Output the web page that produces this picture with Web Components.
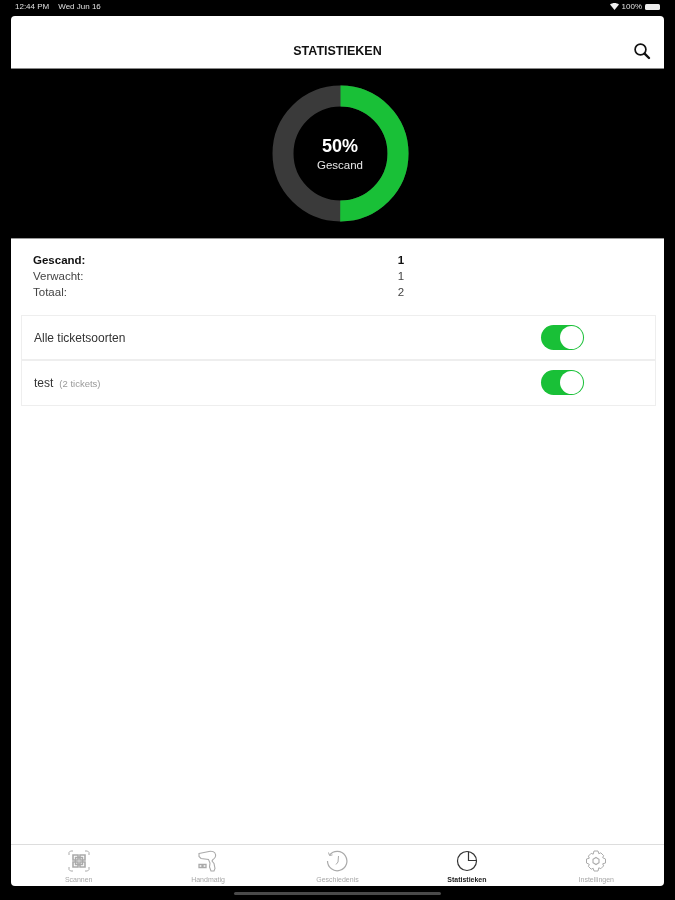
<!DOCTYPE html>
<html lang="nl">
<head>
<meta charset="utf-8">
<title>Statistieken</title>
<style>
  html, body { margin: 0; height: 100%; background: #000; }
  body { font-family: "Liberation Sans", Arial, sans-serif; overflow: hidden; }
</style>
</head>
<body>
<app-screen>
  <status-bar slot="status" time="12:44 PM" date="Wed Jun 16" battery="100%"></status-bar>
  <nav-header slot="header" title="STATISTIEKEN"></nav-header>
  <donut-chart slot="chart" percent="50" label="Gescand"></donut-chart>

  <stat-table>
    <stat-row strong label="Gescand:" value="1"></stat-row>
    <stat-row label="Verwacht:" value="1"></stat-row>
    <stat-row label="Totaal:" value="2"></stat-row>
  </stat-table>

  <ticket-list>
    <ticket-row label="Alle ticketsoorten"></ticket-row>
    <ticket-row label="test" note="(2 tickets)"></ticket-row>
  </ticket-list>

  <tab-bar slot="tabs">
    <tab-item label="Scannen" icon="scan"></tab-item>
    <tab-item label="Handmatig" icon="scanner"></tab-item>
    <tab-item label="Geschiedenis" icon="history"></tab-item>
    <tab-item label="Statistieken" icon="stats" active></tab-item>
    <tab-item label="Instellingen" icon="gear"></tab-item>
  </tab-bar>
</app-screen>

<script>
class AppScreen extends HTMLElement {
  constructor() {
    super();
    this.attachShadow({ mode: "open" });
    this.shadowRoot.innerHTML = `
    <style>
      :host {
        display: flex;
        flex-direction: column;
        height: 900px;
        background: #000;
        filter: blur(0.5px);
      }
      .sheet {
        flex: 1;
        display: flex;
        flex-direction: column;
        margin: 0 11px;
        background: #fff;
        border-radius: 0 0 4px 4px;
        border-top: 1px solid #999;
      }
      .content { flex: 1; }
      .home {
        height: 14px;
        display: flex;
        justify-content: center;
        align-items: center;
      }
      .home i {
        width: 207px;
        height: 3px;
        border-radius: 2px;
        background: #4a4a4a;
      }
    </style>
    <slot name="status"></slot>
    <slot name="header"></slot>
    <slot name="chart"></slot>
    <div class="sheet">
      <div class="content"><slot></slot></div>
      <slot name="tabs"></slot>
    </div>
    <div class="home"><i></i></div>
  `;
  }
}
customElements.define("app-screen", AppScreen);

class StatusBar extends HTMLElement {
  constructor() {
    super();
    this.attachShadow({ mode: "open" });
  }
  connectedCallback() {
    this.shadowRoot.innerHTML = `
    <style>
      :host {
        display: flex;
        align-items: center;
        justify-content: space-between;
        height: 16px;
        padding: 0 15px 3px 15px;
        box-sizing: border-box;
        color: #e0e0e0;
        font-size: 8px;
      }
      .left { display: flex; gap: 9px; }
      .right { display: flex; align-items: center; gap: 3px; }
      .batt { width: 15px; height: 6px; background: #eee; border-radius: 1.5px; }
    </style>
    <div class="left"><span>${this.getAttribute("time")}</span><span>${this.getAttribute("date")}</span></div>
    <div class="right">
      <svg width="9" height="7" viewBox="0 0 9 7"><path d="M0 1.5C2.5-.5 6.5-.5 9 1.5L4.5 7Z" fill="#eee"/></svg>
      <span>${this.getAttribute("battery")}</span>
      <span class="batt"></span>
    </div>
  `;
  }
}
customElements.define("status-bar", StatusBar);

class NavHeader extends HTMLElement {
  constructor() {
    super();
    this.attachShadow({ mode: "open" });
  }
  connectedCallback() {
    this.shadowRoot.innerHTML = `
    <style>
      :host {
        display: block;
        margin: 0 11px;
        height: 53px;
        box-sizing: border-box;
        background: #fff;
        border-radius: 4px 4px 0 0;
        border-bottom: 1px solid #888;
        position: relative;
      }
      h1 {
        margin: 0;
        padding-top: 28px;
        text-align: center;
        font-size: 12.5px;
        line-height: 14px;
        font-weight: bold;
        color: #111;
      }
      svg { position: absolute; right: 13px; top: 26px; }
    </style>
    <h1>${this.getAttribute("title")}</h1>
    <svg width="18" height="18" viewBox="0 0 18 18" fill="none" stroke="#111">
      <circle cx="7.5" cy="7.5" r="5.4" stroke-width="1.7"/>
      <path d="M11.6 11.6L16 16" stroke-width="2.4" stroke-linecap="round"/>
    </svg>
  `;
  }
}
customElements.define("nav-header", NavHeader);

class DonutChart extends HTMLElement {
  constructor() {
    super();
    this.attachShadow({ mode: "open" });
  }
  connectedCallback() {
    const percent = Number(this.getAttribute("percent"));
    const r = 57.5;
    const full = 2 * Math.PI * r;
    this.shadowRoot.innerHTML = `
    <style>
      :host {
        display: flex;
        justify-content: center;
        padding: 16px 0 16px 5px;
        box-sizing: border-box;
        height: 169px;
      }
      .ring {
        width: 137px;
        height: 137px;
        display: grid;
        place-items: center;
        position: relative;
      }
      svg { position: absolute; inset: 0; }
      .txt {
        position: relative;
        display: flex;
        flex-direction: column;
        align-items: center;
        color: #fff;
      }
      b { font-size: 18px; line-height: 20px; font-weight: bold; margin-top: 2px; }
      span { font-size: 11.5px; line-height: 16px; color: #e6e6e6; margin-top: 1px; }
    </style>
    <div class="ring">
      <svg width="137" height="137" viewBox="0 0 137 137" fill="none" stroke-width="21">
        <circle cx="68.5" cy="68.5" r="${r}" stroke="#3a3a3a"/>
        <circle cx="68.5" cy="68.5" r="${r}" stroke="#19c037" transform="rotate(-90 68.5 68.5)"
          stroke-dasharray="${full * percent / 100} ${full}"/>
      </svg>
      <div class="txt"><b>${percent}%</b><span>${this.getAttribute("label")}</span></div>
    </div>
  `;
  }
}
customElements.define("donut-chart", DonutChart);

class StatTable extends HTMLElement {
  constructor() {
    super();
    this.attachShadow({ mode: "open" });
    this.shadowRoot.innerHTML = `
    <style>
      :host { display: block; padding: 13px 0 15px 22px; }
    </style>
    <slot></slot>
  `;
  }
}
customElements.define("stat-table", StatTable);

class StatRow extends HTMLElement {
  constructor() {
    super();
    this.attachShadow({ mode: "open" });
  }
  connectedCallback() {
    this.shadowRoot.innerHTML = `
    <style>
      :host {
        display: grid;
        grid-template-columns: 362px 12px;
        height: 16px;
        line-height: 16px;
        font-size: 11.5px;
        color: ${this.hasAttribute("strong") ? "#111" : "#444"};
        font-weight: ${this.hasAttribute("strong") ? "bold" : "normal"};
      }
      span:last-child { text-align: center; }
    </style>
    <span>${this.getAttribute("label")}</span><span>${this.getAttribute("value")}</span>
  `;
  }
}
customElements.define("stat-row", StatRow);

class TicketList extends HTMLElement {
  constructor() {
    super();
    this.attachShadow({ mode: "open" });
    this.shadowRoot.innerHTML = `
    <style>
      :host {
        display: block;
        margin: 0 8px 0 10px;
        padding-bottom: 1px;
        border: 1px solid #eee;
      }
      ::slotted(ticket-row:not(:last-child)) { border-bottom: 2px solid #eee; }
    </style>
    <slot></slot>
  `;
  }
}
customElements.define("ticket-list", TicketList);

class TicketRow extends HTMLElement {
  constructor() {
    super();
    this.attachShadow({ mode: "open" });
  }
  connectedCallback() {
    const note = this.getAttribute("note");
    this.shadowRoot.innerHTML = `
    <style>
      :host {
        display: flex;
        align-items: center;
        height: 43px;
        padding: 0 71px 0 12px;
        font-size: 12px;
        color: #333;
      }
      .name { flex: 1; display: flex; align-items: baseline; gap: 6px; }
      small { font-size: 9.5px; color: #999; }
    </style>
    <div class="name"><span>${this.getAttribute("label")}</span>${note ? `<small>${note}</small>` : ""}</div>
    <toggle-switch></toggle-switch>
  `;
  }
}
customElements.define("ticket-row", TicketRow);

class ToggleSwitch extends HTMLElement {
  constructor() {
    super();
    this.attachShadow({ mode: "open" });
    this.shadowRoot.innerHTML = `
    <style>
      :host {
        display: flex;
        justify-content: flex-end;
        width: 43px;
        height: 25px;
        box-sizing: border-box;
        border-radius: 13px;
        background: #19c037;
        padding: 1px;
      }
      i { width: 23px; height: 23px; border-radius: 50%; background: #fff; }
    </style>
    <i></i>
  `;
  }
}
customElements.define("toggle-switch", ToggleSwitch);

class TabBar extends HTMLElement {
  constructor() {
    super();
    this.attachShadow({ mode: "open" });
    this.shadowRoot.innerHTML = `
    <style>
      :host {
        display: grid;
        grid-template-columns: repeat(5, 1fr);
        height: 41px;
        padding: 0 3px;
        border-top: 1px solid #ddd;
      }
    </style>
    <slot></slot>
  `;
  }
}
customElements.define("tab-bar", TabBar);

const TAB_ICONS = {
  scan: `<path d="M1 5V2.500L2.500 1H5M17 1h2.500L21 2.500V5M21 17v2.500L19.500 21H17M5 21H2.500L1 19.500V17" stroke-width="1"/>
    <path d="M5 5h5v5H5zM12 5h5v5h-5zM5 12h5v5H5zM12 12h5v5h-5z" stroke-width="1.600"/>
    <path d="M7.500 7.500h7v7h-7z" stroke-width="1.500"/>`,
  scanner: `<path d="M2 3.500L12 1.500c3-.5 6 .5 6.500 3 .5 2-1 4-2.500 5l-1 1.500 2 2.500 1 5-1 2.500h-3l-1.500-4 .5-4-1.500-3.500L4 8.500 2 6.500z" stroke-width="1.100"/>
    <path d="M2 14.500h3v3H2zM6 14.500h3v3H6z" stroke-width="1.300"/>`,
  history: `<path d="M3.600 5A9.700 9.700 0 1 1 1.500 11" stroke-width="1.200"/>
    <path d="M2.500 2.500l1 3 3-.6" stroke-width="1"/>
    <path d="M12.500 6l-.5 6-2 2.500" stroke-width="1"/>`,
  stats: `<circle cx="11" cy="11" r="9.500" stroke-width="1.200"/>
    <path d="M12.500 1.500V10.500H20.500" stroke-width="1.200"/>`,
  gear: `<path d="M9 1h4l.8 2.700 2-.9 2.800 2.800-.9 2.100L20.500 9v4l-2.800.8.900 2.100-2.800 2.800-2-.9L13 21H9l-.8-2.700-2 .9-2.800-2.800.9-2.100L1.500 13V9l2.800-.8-.9-2.100 2.800-2.800 2 .9z" stroke-width="1"/>
    <path d="M11 7.500l3 1.700v3.600l-3 1.700-3-1.700V9.200z" stroke-width="1.100"/>`,
};

class TabItem extends HTMLElement {
  constructor() {
    super();
    this.attachShadow({ mode: "open" });
  }
  connectedCallback() {
    const active = this.hasAttribute("active");
    this.shadowRoot.innerHTML = `
    <style>
      :host {
        display: flex;
        flex-direction: column;
        align-items: center;
        padding-top: 5px;
        color: ${active ? "#222" : "#a8a8a8"};
        font-size: 7px;
        font-weight: ${active ? "bold" : "normal"};
      }
      svg { display: block; }
      span { margin-top: 3px; line-height: 9px; }
    </style>
    <svg width="22" height="22" viewBox="0 0 22 22" fill="none" stroke="${active ? "#333" : "#aaa"}">
      ${TAB_ICONS[this.getAttribute("icon")]}
    </svg>
    <span>${this.getAttribute("label")}</span>
  `;
  }
}
customElements.define("tab-item", TabItem);
</script>
</body>
</html>
